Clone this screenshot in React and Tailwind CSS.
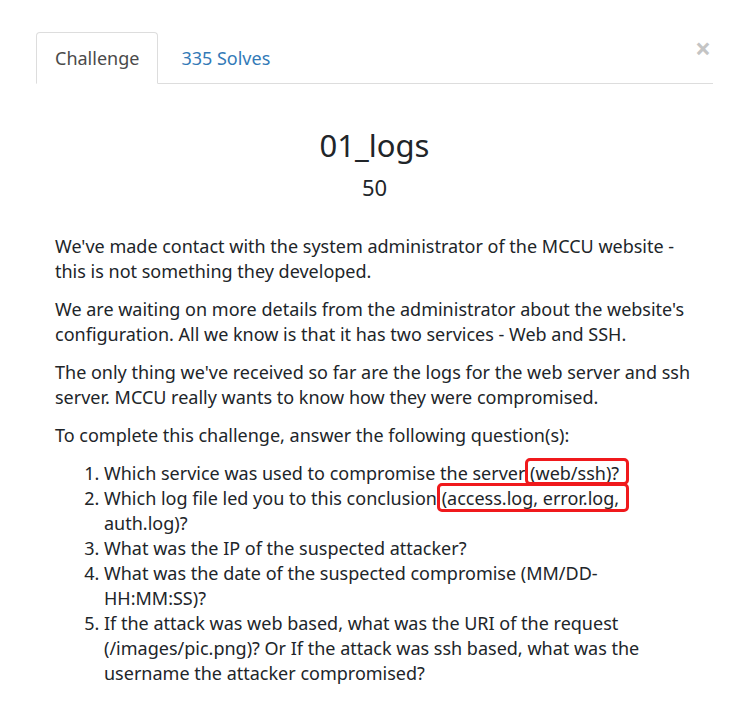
import React from 'react';

const Mark = ({ children, box }) => (
  <span className="relative">
    {children}
    <span className={`pointer-events-none absolute border-[3px] border-[#f0191c] rounded-[5px] ${box}`} />
  </span>
);

export default function App() {
  return (
    <div className="w-[748px] h-[712px] overflow-hidden bg-white pl-[36px] pr-[35px] pt-[32px] font-['Noto_Sans',sans-serif] text-[#212529]">
      <div className="relative">
        <ul className="flex border-b border-[#ddd]">
          <li className="-mb-px flex h-[52px] items-center rounded-t-[4px] border border-[#ddd] border-b-white bg-white px-[18px] text-[18px] text-[#4a4a4a]">
            Challenge
          </li>
          <li className="-mb-px ml-[2px] flex h-[52px] items-center border border-transparent px-[20px] text-[18px] text-[#337ab7]">
            335 Solves
          </li>
        </ul>
        <button className="absolute right-[2px] top-[2px] text-[28px] font-bold leading-none text-[#c4c4c4]" aria-label="Close">
          ×
        </button>
      </div>

      <div className="mt-[42px] text-center">
        <h2 className="text-[31px] leading-[38px]">01_logs</h2>
        <h4 className="mt-[9px] text-[22px] leading-[28px]">50</h4>
      </div>

      <div className="mt-[33px] px-[19px] text-[18px] leading-[25px]">
        <p className="mb-[13px]">
          We've made contact with the system administrator of the MCCU website - this is not something they developed.
        </p>
        <p className="mb-[13px]">
          We are waiting on more details from the administrator about the website's configuration. All we know is that it has two services - Web and SSH.
        </p>
        <p className="mb-[13px]">
          The only thing we've received so far are the logs for the web server and ssh server. MCCU really wants to know how they were compromised.
        </p>
        <p className="mb-[13px]">To complete this challenge, answer the following question(s):</p>
        <ol className="list-decimal pl-[49px]">
          <li>
            Which service was used to compromise the server{' '}
            <Mark box="-left-[5px] -right-[10px] -top-[3px] bottom-0">(web/ssh)?</Mark>
          </li>
          <li>
            Which log file led you to this conclusion{' '}
            <Mark box="-left-[5px] -right-[10px] -top-[3px] -bottom-[2px]">(access.log, error.log,</Mark> auth.log)?
          </li>
          <li>What was the IP of the suspected attacker?</li>
          <li>What was the date of the suspected compromise (MM/DD-HH:MM:SS)?</li>
          <li>
            If the attack was web based, what was the URI of the request (/images/pic.png)? Or If the attack was ssh based, what was the username the attacker compromised?
          </li>
        </ol>
      </div>
    </div>
  );
}
